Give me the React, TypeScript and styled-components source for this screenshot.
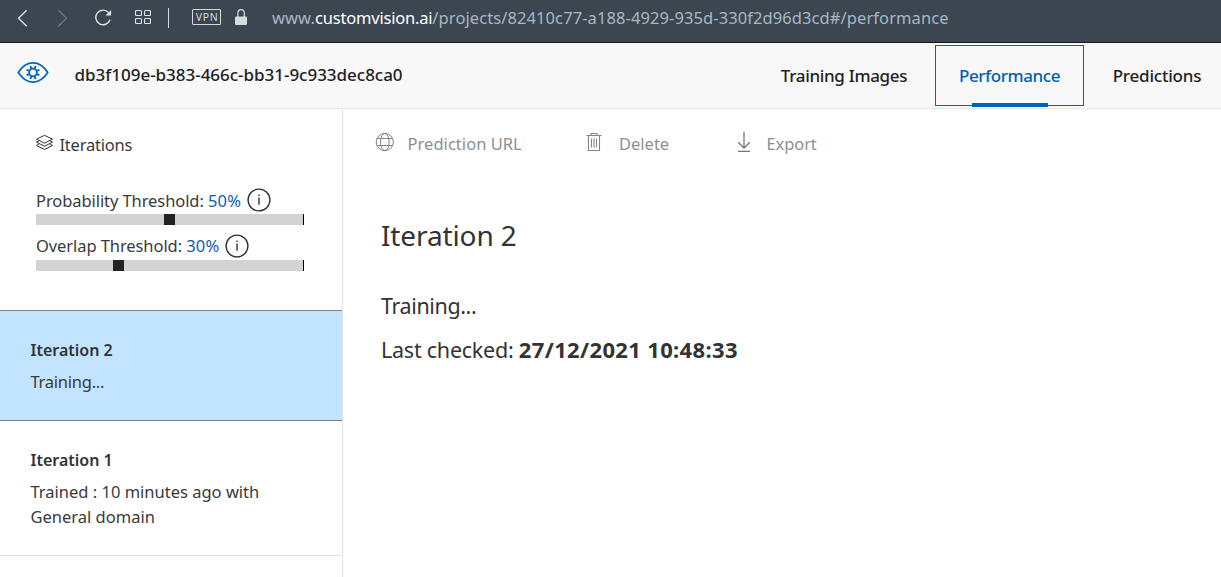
import React from 'react';
import styled, { createGlobalStyle } from 'styled-components';

const GlobalStyle = createGlobalStyle`
  * { box-sizing: border-box; }
  body {
    margin: 0;
    background: #fff;
    color: #333;
    font-family: "Noto Sans", "Open Sans", sans-serif;
    font-size: 16.5px;
    font-weight: 400;
    overflow: hidden;
  }
`;

const Page = styled.div`
  display: flex;
  flex-direction: column;
  width: 100%;
  height: 100vh;
`;

const BrowserBar = styled.div`
  display: flex;
  align-items: center;
  flex: none;
  height: 43px;
  padding: 0 0 7px 16px;
  background: #3b4650;
  border-bottom: 1px solid #14181c;
`;

const BarIcon = styled.svg<{ $gap: number }>`
  display: block;
  flex: none;
  margin-right: ${(p) => p.$gap}px;
`;

const BarDivider = styled.div`
  width: 1px;
  height: 20px;
  margin-right: 23px;
  background: #d5dadd;
`;

const VpnBadge = styled.div`
  width: 29px;
  height: 16px;
  margin: 0 13px 2px 0;
  padding-left: 1px;
  border: 1px solid #d5dadd;
  border-radius: 1px;
  color: #d5dadd;
  font-size: 10.5px;
  line-height: 14px;
  letter-spacing: 0.6px;
  text-align: center;
`;

const Url = styled.div`
  color: #a9b7c4;
  line-height: 24px;
  letter-spacing: 0.09px;
  white-space: nowrap;
`;

const Domain = styled.span`
  color: #fff;
  letter-spacing: -0.2px;
`;

const Header = styled.header`
  display: flex;
  flex: none;
  height: 66px;
  padding-left: 17px;
  background: #f8f8f8;
  border-bottom: 1px solid #e6e6e6;
`;

const Logo = styled.svg`
  display: block;
  flex: none;
  margin: 18px 25.5px 0 0;
`;

const ProjectName = styled.div`
  flex: 1;
  margin-top: 19px;
  color: #222;
  font-size: 17px;
  font-weight: 500;
  line-height: 25px;
  letter-spacing: -0.02px;
`;

const Nav = styled.nav`
  display: flex;
  flex: none;
  margin-right: -9px;
  padding-top: 2px;
`;

const Tab = styled.a<{ $active?: boolean; $width: number; $spacing: number }>`
  display: flex;
  flex-direction: column;
  align-items: center;
  width: ${(p) => p.$width}px;
  height: 61px;
  padding-top: 17px;
  border: 1px solid ${(p) => (p.$active ? '#0063b1' : 'transparent')};
  color: ${(p) => (p.$active ? '#0063b1' : '#222')};
  font-size: 17px;
  font-weight: 500;
  line-height: 25px;
  letter-spacing: ${(p) => p.$spacing}px;
  white-space: nowrap;
`;

const TabUnderline = styled.span`
  flex: none;
  width: 76px;
  height: 4px;
  margin-top: 15px;
  background: #0063b1;
`;

const Body = styled.div`
  display: flex;
  flex: 1;
  min-height: 0;
`;

const Sidebar = styled.aside`
  flex: none;
  width: 343px;
  border-right: 1px solid #e2e2e2;
`;

const Controls = styled.div`
  height: 201px;
  padding: 23px 0 0 36px;
  color: #3a3a3a;
`;

const SectionTitle = styled.div`
  display: flex;
  align-items: center;
  gap: 6.5px;
  height: 24px;
  margin: 0 0 32px -1px;
  letter-spacing: -0.22px;
`;

const LayersIcon = styled.svg`
  display: block;
  margin-bottom: 2px;
`;

const Threshold = styled.div<{ $gap: number }>`
  width: 268px;
  margin-bottom: ${(p) => p.$gap}px;
`;

const ThresholdLabel = styled.div<{ $gap: number }>`
  display: flex;
  align-items: center;
  height: 25px;
  margin-bottom: ${(p) => p.$gap}px;
  line-height: 25px;
  letter-spacing: -0.08px;
  white-space: pre;
`;

const ThresholdValue = styled.span`
  margin-right: 6px;
  color: #0f5cab;
  letter-spacing: 0.2px;
`;

const InfoCircle = styled.svg<{ $lift: number }>`
  display: block;
  flex: none;
  margin-bottom: ${(p) => p.$lift}px;
`;

const Track = styled.div`
  height: 11px;
  background: #d3d3d3;
  border-right: 1px solid #000;
`;

const Thumb = styled.div`
  width: 11px;
  height: 11px;
  background: #222;
`;

const IterationItem = styled.div<{ $selected?: boolean }>`
  height: ${(p) => (p.$selected ? 111 : 135)}px;
  padding: 27px 60px 0 30.5px;
  background: ${(p) => (p.$selected ? '#c3e4ff' : '#fff')};
  border-top: ${(p) => (p.$selected ? '1px solid #7d8185' : '0')};
  border-bottom: 1px solid ${(p) => (p.$selected ? '#7d8185' : '#e2e2e2')};
`;

const IterationName = styled.div`
  margin-bottom: 6px;
  font-size: 16px;
  font-weight: 600;
  line-height: 25px;
`;

const IterationStatus = styled.div<{ $spacing: number }>`
  color: #3a3a3a;
  line-height: 25px;
  letter-spacing: ${(p) => p.$spacing}px;
  white-space: nowrap;
`;

const Main = styled.main`
  flex: 1;
  padding-top: 22px;
`;

const Toolbar = styled.div`
  display: flex;
  align-items: center;
  height: 25px;
  padding-left: 32px;
  color: #8f8f8f;
`;

const ToolbarButton = styled.div<{ $width: number; $gap: number; $spacing: number }>`
  display: flex;
  align-items: center;
  gap: ${(p) => p.$gap}px;
  width: ${(p) => p.$width}px;
  line-height: 25px;
  letter-spacing: ${(p) => p.$spacing}px;
  white-space: nowrap;
`;

const ToolbarIcon = styled.svg`
  display: block;
  flex: none;
  margin-bottom: 3px;
`;

const Details = styled.section`
  padding-left: 38px;
`;

const Title = styled.h1`
  margin: 59px 0 36px;
  font-size: 28px;
  font-weight: 400;
  line-height: 40px;
  letter-spacing: -0.12px;
`;

const DetailLine = styled.p<{ $spacing: number }>`
  margin: 0 0 13px;
  font-size: 21.5px;
  line-height: 30px;
  letter-spacing: ${(p) => p.$spacing}px;
`;

const Timestamp = styled.strong`
  font-size: 22px;
  font-weight: 700;
  letter-spacing: 0.34px;
`;

const ThresholdControl = ({ label, value, thumb, labelGap, gap, lift }: {
  label: string; value: string; thumb: number; labelGap: number; gap: number; lift: number;
}) => (
  <Threshold $gap={gap}>
    <ThresholdLabel $gap={labelGap}>
      {label} <ThresholdValue>{value}</ThresholdValue>
      <InfoCircle $lift={lift} width="24" height="24" fill="none" stroke="#333" strokeWidth="1.4">
        <circle cx="12" cy="12" r="10.9" />
        <path d="M12 9.5v7.2M12 6.4v1.5" />
      </InfoCircle>
    </ThresholdLabel>
    <Track>
      <Thumb style={{ marginLeft: thumb }} />
    </Track>
  </Threshold>
);

export default function App() {
  return (
    <Page>
      <GlobalStyle />
      <BrowserBar>
        <BarIcon $gap={27} width="12" height="18" fill="none" stroke="#dfe3e6" strokeWidth="1.3">
          <path d="M10.7 1.2 2.5 9.2l8.2 8" />
        </BarIcon>
        <BarIcon $gap={26} width="14" height="18" fill="none" stroke="#6c7781" strokeWidth="1.2">
          <path d="M3.3 1.2l8.2 8-8.2 8" />
        </BarIcon>
        <BarIcon $gap={23} width="17" height="18" fill="none" stroke="#dfe3e6" strokeWidth="1.4">
          <path d="M13.6 3.6A7.3 7.3 0 1 0 15 10.8" />
          <path d="M16.1 1v5.6h-5.6z" fill="#dfe3e6" stroke="none" />
        </BarIcon>
        <BarIcon $gap={17} width="16" height="18" fill="none" stroke="#dfe3e6" strokeWidth="1.1">
          <rect x="0.5" y="1.5" width="6" height="5" rx="1" />
          <rect x="9.5" y="1.5" width="6" height="5" rx="1" />
          <rect x="0.5" y="9.5" width="6" height="5" rx="1" />
          <rect x="9.5" y="9.5" width="6" height="5" rx="1" />
        </BarIcon>
        <BarDivider />
        <VpnBadge>VPN</VpnBadge>
        <BarIcon $gap={24} width="14" height="18" fill="none">
          <path d="M3.9 9V4.1a3.2 3.4 0 0 1 6.4 0V9" stroke="#d5dadd" strokeWidth="1.2" />
          <rect x="1" y="7.5" width="12" height="8.5" rx="1.2" fill="#d5dadd" />
        </BarIcon>
        <Url>
          www.<Domain>customvision.ai</Domain>/projects/82410c77-a188-4929-935d-330f2d96d3cd#/performance
        </Url>
      </BrowserBar>

      <Header>
        <Logo width="32" height="23" viewBox="0 0 32 23" fill="none" stroke="#0067b8">
          <path d="M1.3 11.5C5.5 5 10.3 1.9 16 1.9s10.5 3.1 14.7 9.6c-4.2 6.5-9 9.6-14.7 9.6S5.5 18 1.3 11.5z" strokeWidth="1.7" />
          <circle cx="16" cy="11.5" r="3.9" strokeWidth="1.9" />
          <path d="M17.8 7.2l.9-2.1M20.3 9.7l2.1-.9M20.3 13.3l2.1.9M17.8 15.8l.9 2.1M14.2 15.8l-.9 2.1M11.7 13.3l-2.1.9M11.7 9.7l-2.1-.9M14.2 7.2l-.9-2.1" strokeWidth="2" />
        </Logo>
        <ProjectName>db3f109e-b383-466c-bb31-9c933dec8ca0</ProjectName>
        <Nav>
          <Tab $width={182} $spacing={-0.32}>Training Images</Tab>
          <Tab $width={149} $spacing={-0.42} $active>
            Performance
            <TabUnderline />
          </Tab>
          <Tab $width={146} $spacing={-0.2}>Predictions</Tab>
        </Nav>
      </Header>

      <Body>
        <Sidebar>
          <Controls>
            <SectionTitle>
              <LayersIcon width="18" height="20" viewBox="0 0 18 20" fill="none" stroke="#333" strokeWidth="1">
                <path d="M9.5 2.3 17.5 6.2 9.5 10.2 1.5 6.2z" />
                <path d="M4 7.7 1.5 9.2l8 4 8-4L15 7.7M4 10.9 1.5 12.5l8 4 8-4L15 10.9" />
              </LayersIcon>
              Iterations
            </SectionTitle>
            <ThresholdControl label="Probability Threshold:" value="50%" thumb={128} labelGap={1} gap={8} lift={2} />
            <ThresholdControl label="Overlap Threshold:" value="30%" thumb={77} labelGap={2} gap={0} lift={0} />
          </Controls>
          <IterationItem $selected>
            <IterationName>Iteration 2</IterationName>
            <IterationStatus $spacing={-0.25}>Training...</IterationStatus>
          </IterationItem>
          <IterationItem>
            <IterationName>Iteration 1</IterationName>
            <IterationStatus $spacing={0}>
              Trained : 10 minutes ago with
              <br />
              General domain
            </IterationStatus>
          </IterationItem>
        </Sidebar>

        <Main>
          <Toolbar>
            <ToolbarButton $width={210} $gap={12.5} $spacing={0.04}>
              <ToolbarIcon width="20" height="20" fill="none" stroke="#858585" strokeWidth="1">
                <circle cx="9.8" cy="10" r="8.6" />
                <ellipse cx="9.8" cy="10" rx="4.3" ry="8.6" />
                <path d="M1.8 6.5h16M1.8 13.5h16" />
              </ToolbarIcon>
              Prediction URL
            </ToolbarButton>
            <ToolbarButton $width={150} $gap={16} $spacing={0}>
              <ToolbarIcon width="18" height="20" fill="none" stroke="#858585" strokeWidth="1.1">
                <path d="M1.5 3.5h15M6 3.5V1.5h6v2M3.5 3.5v15h11v-15M6.5 6.5v9M9 6.5v9M11.5 6.5v9" />
              </ToolbarIcon>
              Delete
            </ToolbarButton>
            <ToolbarButton $width={100} $gap={13.5} $spacing={-0.1}>
              <ToolbarIcon width="18" height="22" fill="none" stroke="#777" strokeWidth="1.3">
                <path d="M9 1v16M3.2 11.3 9 17l5.8-5.7M3 20.4h12" />
              </ToolbarIcon>
              Export
            </ToolbarButton>
          </Toolbar>
          <Details>
            <Title>Iteration 2</Title>
            <DetailLine $spacing={-0.38}>Training...</DetailLine>
            <DetailLine $spacing={-0.24}>
              Last checked: <Timestamp>27/12/2021 10:48:33</Timestamp>
            </DetailLine>
          </Details>
        </Main>
      </Body>
    </Page>
  );
}
